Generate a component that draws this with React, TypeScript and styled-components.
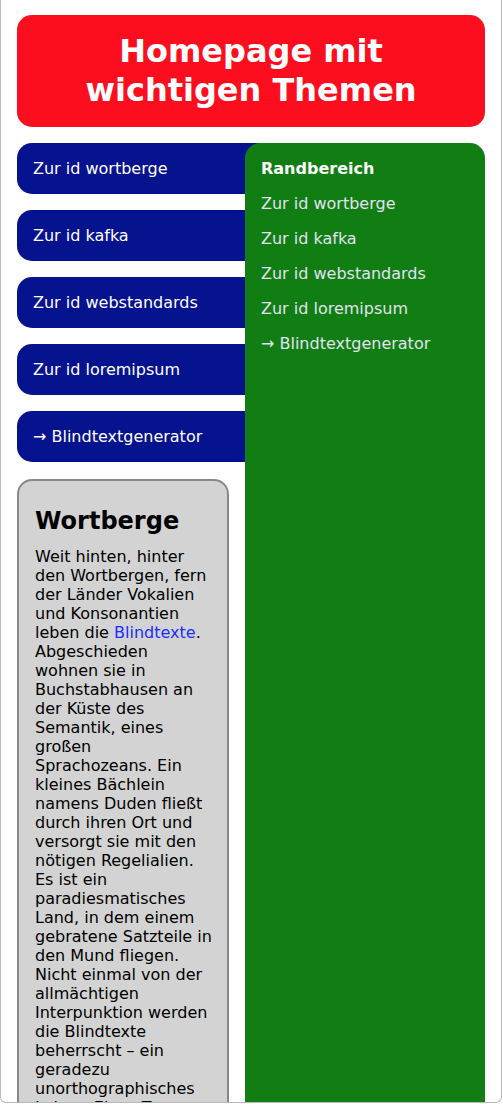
import styled, { createGlobalStyle } from "styled-components";

const GlobalStyle = createGlobalStyle`
  html, body {
    margin: 0;
    padding: 0;
    background: #fff;
  }
  body {
    font-family: "DejaVu Sans", Verdana, sans-serif;
    font-size: 16px;
    line-height: 19px;
    color: #000;
  }
`;

const Frame = styled.div`
  box-sizing: border-box;
  width: 502px;
  height: 1103px;
  overflow: hidden;
  border: 1px solid #b9b9b9;
  border-top: none;
  border-radius: 0 0 6px 6px;
  padding: 15px 16px 0;
`;

const Page = styled.div`
  display: grid;
  grid-template-columns: 228px 240px;
  grid-template-rows: auto 1fr;
  row-gap: 16px;
  width: 468px;
`;

const Header = styled.header`
  grid-column: 1 / 3;
  background: #fc0e1e;
  border-radius: 15px;
  padding: 17px 16px;
  h1 {
    margin: 0;
    color: #fff;
    font-size: 32px;
    line-height: 39px;
    font-weight: bold;
    text-align: center;
  }
`;

const Main = styled.main`
  display: flex;
  flex-direction: column;
`;

const Nav = styled.nav`
  display: flex;
  flex-direction: column;
  gap: 16px;
  margin-right: -20px;
`;

const NavItem = styled.a`
  display: block;
  background: #06138f;
  color: #fff;
  text-decoration: none;
  padding: 16px;
  line-height: 19px;
  border-radius: 15px 0 0 15px;
`;

const Article = styled.article`
  margin-top: 17px;
  margin-right: 16px;
  background: #d3d3d3;
  border: 2px solid #888;
  border-radius: 15px;
  padding: 26px 14px 16px 16px;
  h2 {
    margin: 0 0 12px;
    font-size: 24px;
    line-height: 28px;
    font-weight: bold;
  }
  p {
    margin: 0;
    line-height: 19px;
  }
  a {
    color: #1c2cff;
    text-decoration: none;
  }
`;

const Aside = styled.aside`
  background: #107e12;
  border-radius: 15px 15px 0 0;
  padding: 16px;
  display: flex;
  flex-direction: column;
  gap: 16px;
  h3 {
    margin: 0;
    color: #fff;
    font-size: 16px;
    line-height: 19px;
    font-weight: bold;
  }
`;

const SideLink = styled.a`
  color: #e2e2f2;
  text-decoration: none;
  line-height: 19px;
`;

const links = [
  "Zur id wortberge",
  "Zur id kafka",
  "Zur id webstandards",
  "Zur id loremipsum",
  "→ Blindtextgenerator",
];

export default function App() {
  return (
    <>
      <GlobalStyle />
      <Frame>
        <Page>
          <Header>
            <h1>Homepage mit wichtigen Themen</h1>
          </Header>
          <Main>
            <Nav>
              {links.map((l) => (
                <NavItem key={l} href="#">
                  {l}
                </NavItem>
              ))}
            </Nav>
            <Article>
              <h2>Wortberge</h2>
              <p>
                Weit hinten, hinter den Wortbergen, fern der Länder Vokalien
                und Konsonantien leben die <a href="#">Blindtexte</a>.
                Abgeschieden wohnen sie in Buchstabhausen an der Küste des
                Semantik, eines großen Sprachozeans. Ein kleines Bächlein
                namens Duden fließt durch ihren Ort und versorgt sie mit den
                nötigen Regelialien. Es ist ein paradiesmatisches Land, in dem
                einem gebratene Satzteile in den Mund fliegen. Nicht einmal von
                der allmächtigen Interpunktion werden die Blindtexte beherrscht
                – ein geradezu unorthographisches Leben. Eines Tages aber
                beschloß eine kleine Zeile Blindtext, ihr Name war Lorem Ipsum,
                hinaus zu gehen in die weite Grammatik.
              </p>
            </Article>
          </Main>
          <Aside>
            <h3>Randbereich</h3>
            {links.map((l) => (
              <SideLink key={l} href="#">
                {l}
              </SideLink>
            ))}
          </Aside>
        </Page>
      </Frame>
    </>
  );
}
